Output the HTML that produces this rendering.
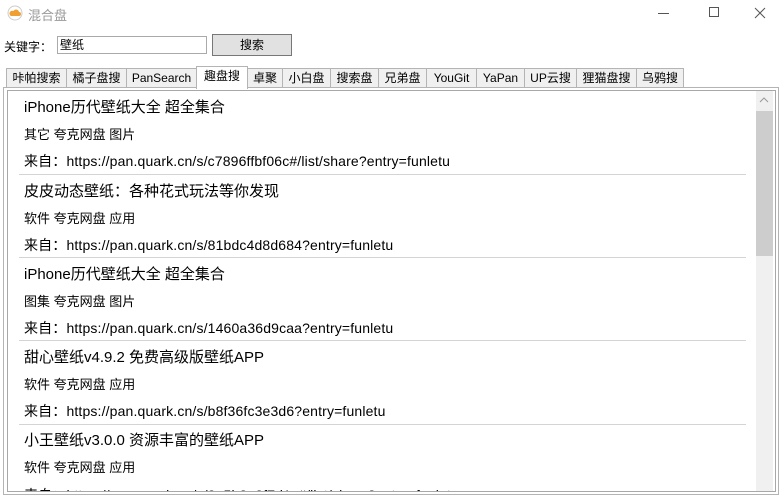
<!DOCTYPE html>
<html><head><meta charset="utf-8"><style>
*{margin:0;padding:0;box-sizing:border-box}
body{width:782px;height:498px;background:#fff;position:relative;overflow:hidden;font-family:"Liberation Sans","Noto Sans CJK SC",sans-serif;font-size:12px;color:#000}
.a{position:absolute;white-space:nowrap}
.tab{position:absolute;top:68px;height:20px;border:1px solid #b4b4b4;background:#f0f0f0;font-size:12px;line-height:18px;text-align:center}
.tab.sel{top:66px;height:23px;background:#fff;border-bottom:none;z-index:2}
.t{font-size:15px}
.s{font-size:13px}
.u{font-size:14px;letter-spacing:0.15px}
.sep{position:absolute;left:19px;width:727px;height:1px;background:#d4d4d4}
</style></head><body>
<svg class="a" style="left:7px;top:5px" width="16" height="16"><circle cx="8" cy="8" r="7" fill="#fff" stroke="#ccc"/><path d="M4 11h8a2 2 0 0 0 0-4a3 3 0 0 0-5.5-1a2.5 2.5 0 0 0-2.5 5z" fill="#f0a030"/></svg>
<div class="a" style="left:28px;top:5px;font-size:13px;color:#999">混合盘</div>
<div class="a" style="left:658px;top:13px;width:11px;height:1px;background:#555"></div>
<div class="a" style="left:709px;top:7px;width:10px;height:10px;border:1px solid #555"></div>
<svg class="a" style="left:754px;top:7px" width="12" height="12"><path d="M1 1L11 11M11 1L1 11" stroke="#555" stroke-width="1"/></svg>
<div class="a" style="left:4px;top:38px;font-size:12px">关键字：</div>
<div class="a" style="left:57px;top:36px;width:150px;height:18px;border:1px solid #aaa;padding-left:2px;line-height:16px">壁纸</div>
<div class="a" style="left:212px;top:34px;width:80px;height:22px;border:1px solid #777;background:#e1e1e1;text-align:center;line-height:20px">搜索</div>
<div class="tab" style="left:6px;width:61px">咔帕搜索</div>
<div class="tab" style="left:66px;width:61px">橘子盘搜</div>
<div class="tab" style="left:126px;width:71px">PanSearch</div>
<div class="tab sel" style="left:196px;width:52px">趣盘搜</div>
<div class="tab" style="left:247px;width:36px">卓聚</div>
<div class="tab" style="left:282px;width:49px">小白盘</div>
<div class="tab" style="left:330px;width:49px">搜索盘</div>
<div class="tab" style="left:378px;width:49px">兄弟盘</div>
<div class="tab" style="left:426px;width:51px">YouGit</div>
<div class="tab" style="left:476px;width:49px">YaPan</div>
<div class="tab" style="left:524px;width:53px">UP云搜</div>
<div class="tab" style="left:576px;width:61px">狸猫盘搜</div>
<div class="tab" style="left:636px;width:48px">乌鸦搜</div>
<div class="a" style="left:3px;top:87px;width:776px;height:408px;border:1px solid #b4b4b4"></div>
<div class="a" style="left:7px;top:90px;width:769px;height:402px;border:1px solid #a8a8a8;overflow:hidden">
 <div class="a" style="left:748px;top:0;width:17px;height:400px;background:#f0f0f0"></div>
 <div class="a" style="left:748px;top:20px;width:17px;height:145px;background:#cdcdcd"></div>
 <svg class="a" style="left:751px;top:5px" width="10" height="8"><path d="M1 6L5 2L9 6" fill="none" stroke="#999"/></svg>
 <div class="a u" style="left:16px;top:394px">来自：https://pan.quark.cn/s/2a5b8e3f7d1c#/list/share?entry=funletu</div>
</div>
<div class="a t" style="left:24px;top:96px">iPhone历代壁纸大全 超全集合</div>
<div class="a s" style="left:24px;top:124px">其它 夸克网盘 图片</div>
<div class="a u" style="left:24px;top:151px">来自：https://pan.quark.cn/s/c7896ffbf06c#/list/share?entry=funletu</div>
<div class="sep" style="top:174px"></div>
<div class="a t" style="left:24px;top:180px">皮皮动态壁纸：各种花式玩法等你发现</div>
<div class="a s" style="left:24px;top:208px">软件 夸克网盘 应用</div>
<div class="a u" style="left:24px;top:235px">来自：https://pan.quark.cn/s/81bdc4d8d684?entry=funletu</div>
<div class="sep" style="top:257px"></div>
<div class="a t" style="left:24px;top:263px">iPhone历代壁纸大全 超全集合</div>
<div class="a s" style="left:24px;top:291px">图集 夸克网盘 图片</div>
<div class="a u" style="left:24px;top:318px">来自：https://pan.quark.cn/s/1460a36d9caa?entry=funletu</div>
<div class="sep" style="top:340px"></div>
<div class="a t" style="left:24px;top:346px">甜心壁纸v4.9.2 免费高级版壁纸APP</div>
<div class="a s" style="left:24px;top:374px">软件 夸克网盘 应用</div>
<div class="a u" style="left:24px;top:401px">来自：https://pan.quark.cn/s/b8f36fc3e3d6?entry=funletu</div>
<div class="sep" style="top:424px"></div>
<div class="a t" style="left:24px;top:429px">小王壁纸v3.0.0 资源丰富的壁纸APP</div>
<div class="a s" style="left:24px;top:457px">软件 夸克网盘 应用</div>
</body></html>
